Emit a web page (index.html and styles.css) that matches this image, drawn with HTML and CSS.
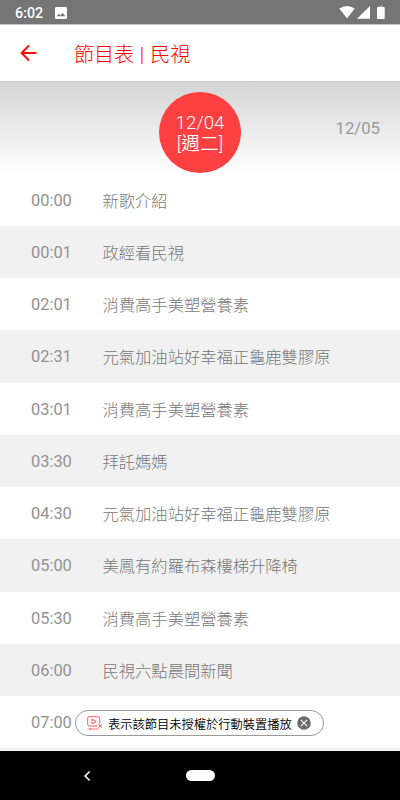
FILE: index.html
```html
<!DOCTYPE html>
<html lang="zh-Hant">
<head>
    <meta charset="UTF-8">
    <meta name="viewport" content="width=device-width, initial-scale=1.0">
    <title>節目表 | 民視</title>
    <link rel="stylesheet" href="styles.css">
</head>
<body>
    <!-- status bar -->
    <div class="status-bar">
        <span class="clock">6:02</span>
        <svg class="photo-icon" width="12" height="12" viewBox="0 0 12 12">
            <path fill="#fff" fill-rule="evenodd" d="M1.3 0h9.4Q12 0 12 1.3v9.4Q12 12 10.7 12H1.3Q0 12 0 10.7V1.3Q0 0 1.3 0zM1.8 9.3h8.6L7.6 5.7 5.4 8.4 3.9 6.6z"/>
        </svg>
        <svg class="signal-icons" width="48" height="16" viewBox="0 0 48 16">
            <path fill="#fff" d="M1.2 3.6Q9 -1.6 16.8 3.6L9 13.2zM32 1v12.7H19zM39 2.8q0-.8.8-.8h6.1q.8 0 .8.8v10.4q0 .8-.8.8h-6.1q-.8 0-.8-.8z"/>
            <path fill="#b5b5b5" d="M41 .8h3.8V2H41z"/>
        </svg>
    </div>

    <div class="header">
        <svg class="back-icon" width="18" height="18" viewBox="0 0 18 18">
            <path fill="none" stroke="#f90b0b" stroke-width="2" d="M16.5 9H2M9 1.5L1.6 9 9 16.5"/>
        </svg>
        <h1>節目表 | 民視</h1>
    </div>

    <div class="dates">
        <div class="date today">12/04<br>[週二]</div>
        <div class="date next">12/05</div>
    </div>

    <div class="program-list">
        <div class="program"><span class="time">00:00</span><span class="name">新歌介紹</span></div>
        <div class="program"><span class="time">00:01</span><span class="name">政經看民視</span></div>
        <div class="program"><span class="time">02:01</span><span class="name">消費高手美塑營養素</span></div>
        <div class="program"><span class="time">02:31</span><span class="name">元氣加油站好幸福正龜鹿雙膠原</span></div>
        <div class="program"><span class="time">03:01</span><span class="name">消費高手美塑營養素</span></div>
        <div class="program"><span class="time">03:30</span><span class="name">拜託媽媽</span></div>
        <div class="program"><span class="time">04:30</span><span class="name">元氣加油站好幸福正龜鹿雙膠原</span></div>
        <div class="program"><span class="time">05:00</span><span class="name">美鳳有約羅布森樓梯升降椅</span></div>
        <div class="program"><span class="time">05:30</span><span class="name">消費高手美塑營養素</span></div>
        <div class="program"><span class="time">06:00</span><span class="name">民視六點晨間新聞</span></div>
        <div class="program"><span class="time">07:00</span></div>
        <div class="program"></div>
    </div>

    <!-- notice floating over the list -->
    <div class="notice">
        <svg width="16" height="15" viewBox="0 0 16 15" fill="none" stroke="#ff5a5a">
            <path d="M10.3 10H2.2Q.7 10 .7 8.5V2.2Q.7.7 2.2.7h9.1q1.5 0 1.5 1.5v5.3M5 3v5l4.2-2.5zM11.4 8l3.4 3.6M14.8 8l-3.4 3.6"/>
            <path stroke-width=".8" d="M.5 13h11.8M3.6 12v2"/>
        </svg>
        <span class="notice-text">表示該節目未授權於行動裝置播放</span>
        <svg width="14" height="14" viewBox="0 0 14 14">
            <circle cx="7" cy="7" r="6.8" fill="#6b6b6b"/>
            <path stroke="#fff" stroke-width="1.1" d="M3.9 3.9l6.2 6.2M10.1 3.9l-6.2 6.2"/>
        </svg>
    </div>

    <!-- system navigation -->
    <div class="nav-bar">
        <svg class="nav-back" width="8" height="12" viewBox="0 0 8 12">
            <path fill="none" stroke="#fff" stroke-width="1.6" d="M6.6 1.5L2.2 6l4.4 4.5"/>
        </svg>
        <div class="nav-home"></div>
    </div>
</body>
</html>
```

FILE: styles.css
```css
* {
    box-sizing: border-box;
}

body {
    display: flex;
    flex-direction: column;
    position: relative;
    width: 400px;
    height: 800px;
    margin: 0;
    overflow: hidden;
    font-family: Roboto, "Noto Sans CJK TC", sans-serif;
    background-color: #fff;
}

.status-bar {
    display: flex;
    align-items: center;
    flex-shrink: 0;
    height: 24px;
    padding: 0 14px 0 15px;
    background-color: #757575;
}

.clock {
    width: 40px;
    font-size: 14.3px;
    font-weight: 500;
    line-height: 24px;
    padding-top: 1px;
    color: #fff;
}

.photo-icon {
    margin-top: 1px;
}

.signal-icons {
    margin-left: auto;
    margin-top: 2px;
}

.header {
    display: flex;
    align-items: center;
    flex-shrink: 0;
    height: 58px;
    padding-left: 20px;
    border-top: 1px solid #c4c4c4;
    border-bottom: 1px solid #c8c8c8;
}

.header h1 {
    margin: 0 0 0 36px;
    font-size: 20px;
    font-weight: 300;
    word-spacing: 1px;
    color: #ff0000;
}

.dates {
    display: flex;
    flex-shrink: 0;
    height: 91.5px;
    padding: 10px 20px 0 159px;
    background: linear-gradient(#d5d5d5, #fff);
}

.today {
    width: 82px;
    height: 81px;
    padding-top: 21px;
    border-radius: 50%;
    font-size: 18.7px;
    font-weight: 350;
    line-height: 21px;
    text-align: center;
    color: #fff;
    background-color: #ff4040;
}

.next {
    margin-left: auto;
    padding-top: 26px;
    font-size: 16.7px;
    line-height: 21px;
    color: #999;
}

.program-list {
    flex: 1;
    min-height: 0;
    overflow: hidden;
}

.program {
    display: flex;
    align-items: center;
    height: 52.25px;
    padding-left: 31px;
    color: #777;
}

.program:nth-child(even) {
    background-color: #f1f1f1;
}

.time {
    width: 71.5px;
    padding-top: 1px;
    font-size: 16.4px;
    color: #929292;
}

.name {
    font-size: 16.3px;
    font-weight: 300;
}

.notice {
    position: absolute;
    left: 75px;
    top: 710px;
    display: flex;
    align-items: center;
    width: 249px;
    height: 26px;
    padding: 0 11px;
    border: 1px solid #999;
    border-radius: 13px;
    background-color: #fff;
}

.notice-text {
    margin: 0 5px 0 5px;
    padding-top: 1px;
    font-size: 12.25px;
    font-weight: 350;
    white-space: nowrap;
    color: #000;
}

.nav-bar {
    display: flex;
    align-items: center;
    flex-shrink: 0;
    height: 49px;
    padding-left: 83px;
    background-color: #000;
}

.nav-home {
    width: 29px;
    height: 11px;
    margin-left: 95px;
    border-radius: 6px;
    background-color: #fff;
}
```
